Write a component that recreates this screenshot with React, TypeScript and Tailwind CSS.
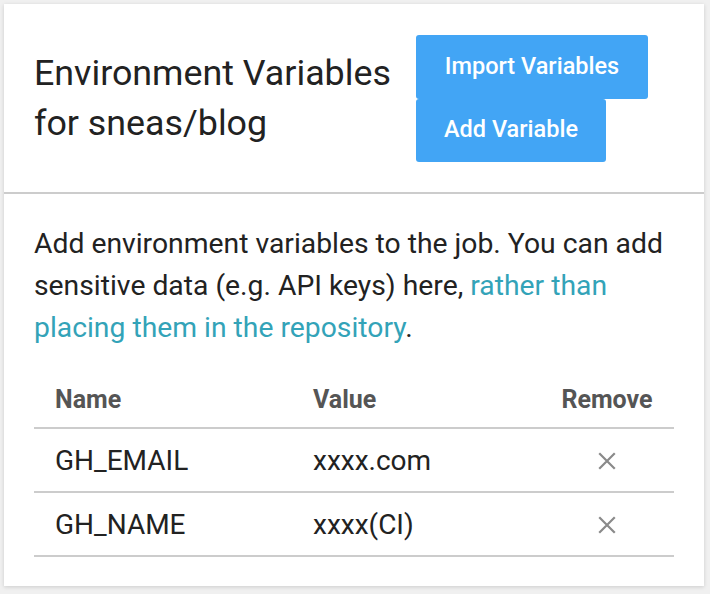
import React from "react";

const rows = [
  { name: "GH_EMAIL", value: "xxxx.com" },
  { name: "GH_NAME", value: "xxxx(CI)" },
];

function XIcon() {
  return (
    <svg width="18" height="18" viewBox="0 0 18 18" fill="none">
      <path d="M2 2L16 16M16 2L2 16" stroke="#8a8a8a" strokeWidth="2.2" strokeLinecap="square" />
    </svg>
  );
}

export default function App() {
  return (
    <div
      className="w-[710px] h-[594px] bg-[#f0f0f0] p-[4px] pr-[6px] pb-[8px]"
      style={{ fontFamily: "Roboto, 'Noto Sans', sans-serif" }}
    >
      <div className="bg-white h-[582px] shadow-[0_1px_4px_rgba(0,0,0,0.15)] flex flex-col">
        <div className="flex items-center p-[30px] h-[188px]">
          <h1 className="w-[382px] text-[35.8px] leading-[50px] text-[#222] font-normal">
            Environment Variables for sneas/blog
          </h1>
          <div className="flex flex-col items-start">
            <button className="h-[64px] w-[232px] bg-[#42a5f5] text-white text-[23.5px] font-medium rounded-[3px]">
              Import Variables
            </button>
            <button className="h-[63px] w-[190px] bg-[#42a5f5] text-white text-[23.5px] font-medium rounded-[3px]">
              Add Variable
            </button>
          </div>
        </div>
        <div className="h-[2px] bg-[#cccccc]" />
        <div className="px-[30px] pt-[29px]">
          <p className="text-[28.3px] leading-[42px] text-[#222]">
            Add environment variables to the job. You can add sensitive data (e.g. API keys) here,{" "}
            <a className="text-[#33a3b8]">rather than placing them in the repository</a>.
          </p>
          <div className="mt-[21px] w-[640px]">
            <div className="flex h-[59px] pt-[3px] items-center border-b-2 border-[#cccccc] text-[25px] font-bold text-[#555]">
              <div className="w-[258px] pl-[21px]">Name</div>
              <div className="w-[248px] pl-[21px]">Value</div>
              <div className="w-[134px] text-center">Remove</div>
            </div>
            {rows.map((r) => (
              <div
                key={r.name}
                className="flex h-[64px] pt-[2px] items-center border-b-2 border-[#cccccc] text-[28px] text-[#222]"
              >
                <div className="w-[258px] pl-[21px]">{r.name}</div>
                <div className="w-[248px] pl-[21px]">{r.value}</div>
                <div className="w-[134px] flex justify-center">
                  <XIcon />
                </div>
              </div>
            ))}
          </div>
        </div>
      </div>
    </div>
  );
}
